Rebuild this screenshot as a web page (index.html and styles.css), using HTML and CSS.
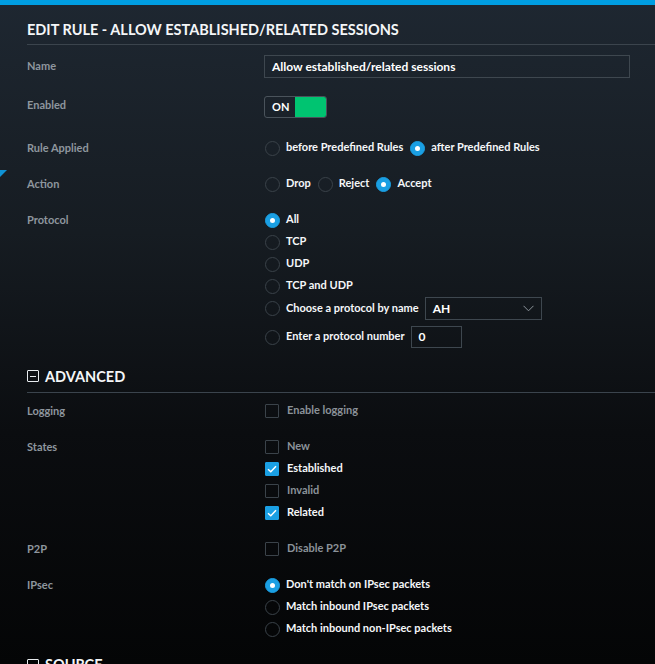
FILE: index.html
```html
<!DOCTYPE html>
<html lang="en">
<head>
<meta charset="utf-8">
<title>Edit Rule</title>
<link rel="stylesheet" href="styles.css">
</head>
<body>
<div class="topbar"></div>
<div class="panel">
  <span class="pointer"></span>
  <h1 class="title">EDIT RULE - ALLOW ESTABLISHED/RELATED SESSIONS</h1>

  <div class="rows rows-first">
    <div class="row">
      <div class="label label-input">Name</div>
      <div class="ctrl"><div class="textbox textbox-wide">Allow established/related sessions</div></div>
    </div>
    <div class="row row-toggle">
      <div class="label label-toggle">Enabled</div>
      <div class="ctrl"><div class="toggle"><span class="toggle-on">ON</span><span class="toggle-knob"></span></div></div>
    </div>
    <div class="row row-after-toggle">
      <div class="label">Rule Applied</div>
      <div class="ctrl inline">
        <label class="opt"><span class="radio"></span><span class="txt">before Predefined Rules</span></label>
        <label class="opt"><span class="radio on"></span><span class="txt">after Predefined Rules</span></label>
      </div>
    </div>
    <div class="row">
      <div class="label">Action</div>
      <div class="ctrl inline">
        <label class="opt"><span class="radio"></span><span class="txt">Drop</span></label>
        <label class="opt"><span class="radio"></span><span class="txt">Reject</span></label>
        <label class="opt"><span class="radio on"></span><span class="txt">Accept</span></label>
      </div>
    </div>
    <div class="row">
      <div class="label">Protocol</div>
      <div class="ctrl">
        <label class="opt"><span class="radio on"></span><span class="txt">All</span></label>
        <label class="opt"><span class="radio"></span><span class="txt">TCP</span></label>
        <label class="opt"><span class="radio"></span><span class="txt">UDP</span></label>
        <label class="opt"><span class="radio"></span><span class="txt">TCP and UDP</span></label>
        <label class="opt opt-select"><span class="radio"></span><span class="txt">Choose a protocol by name</span>
          <span class="textbox select">AH<svg class="chev" width="11" height="7" viewBox="0 0 11 7"><path d="M0.5 0.8 L5.5 5.8 L10.5 0.8" fill="none" stroke="#8c949b" stroke-width="1"/></svg></span>
        </label>
        <label class="opt opt-number"><span class="radio"></span><span class="txt">Enter a protocol number</span>
          <span class="textbox number">0</span>
        </label>
      </div>
    </div>
  </div>

  <h2 class="section section-adv"><span class="collapse"></span>ADVANCED</h2>

  <div class="rows rows-adv">
    <div class="row">
      <div class="label">Logging</div>
      <div class="ctrl">
        <label class="opt"><span class="check"></span><span class="txt dim">Enable logging</span></label>
      </div>
    </div>
    <div class="row">
      <div class="label">States</div>
      <div class="ctrl">
        <label class="opt"><span class="check"></span><span class="txt dim">New</span></label>
        <label class="opt"><span class="check on"><svg width="10" height="8" viewBox="0 0 10 8"><path d="M1 4.2 L3.8 6.8 L9 1.2" fill="none" stroke="#fff" stroke-width="1.5"/></svg></span><span class="txt">Established</span></label>
        <label class="opt"><span class="check"></span><span class="txt dim">Invalid</span></label>
        <label class="opt"><span class="check on"><svg width="10" height="8" viewBox="0 0 10 8"><path d="M1 4.2 L3.8 6.8 L9 1.2" fill="none" stroke="#fff" stroke-width="1.5"/></svg></span><span class="txt">Related</span></label>
      </div>
    </div>
    <div class="row">
      <div class="label">P2P</div>
      <div class="ctrl">
        <label class="opt"><span class="check"></span><span class="txt dim">Disable P2P</span></label>
      </div>
    </div>
    <div class="row">
      <div class="label">IPsec</div>
      <div class="ctrl">
        <label class="opt"><span class="radio on"></span><span class="txt">Don't match on IPsec packets</span></label>
        <label class="opt"><span class="radio"></span><span class="txt">Match inbound IPsec packets</span></label>
        <label class="opt"><span class="radio"></span><span class="txt">Match inbound non-IPsec packets</span></label>
      </div>
    </div>
  </div>

  <h2 class="section section-src"><span class="collapse"></span>SOURCE</h2>
</div>
</body>
</html>
```
FILE: styles.css
```css
* { box-sizing: border-box; }
html, body {
  margin: 0;
  padding: 0;
  height: 100%;
  overflow: hidden;
}
body {
  font-family: Lato, "Open Sans", "Liberation Sans", sans-serif;
  color: #ffffff;
  background: linear-gradient(to bottom, #1e2731 0%, #161c22 35%, #0b0d10 65%, #040506 100%);
}
.topbar {
  height: 5px;
  background: #009ee2;
}
.panel {
  position: relative;
  padding-left: 27px;
}
.pointer {
  position: absolute;
  left: 0;
  top: 165px;
  width: 0;
  height: 0;
  border-top: 7px solid #0f93d6;
  border-right: 7px solid transparent;
}
.title {
  margin: 0;
  height: 40px;
  padding-top: 16px;
  font-size: 14.5px;
  font-weight: 700;
  letter-spacing: 0;
  line-height: 17px;
  color: #f4f6f8;
  border-bottom: 1px solid #3b444d;
}
.rows {
  display: flex;
  flex-direction: column;
  gap: 14px;
}
.rows-first { padding-top: 10px; }
.rows-adv { padding-top: 7px; }
.row {
  display: grid;
  grid-template-columns: 237px 1fr;
  align-items: start;
}
.row-toggle { margin-top: 4px; }
.row-after-toggle { margin-top: 5px; }
.label {
  font-size: 11px;
  font-weight: 700;
  color: #8e969e;
  line-height: 21px;
}
.label-input { line-height: 22px; }
.label-toggle { line-height: 18px; }
.ctrl { display: flex; flex-direction: column; }
.ctrl.inline { flex-direction: row; gap: 6px; }
.opt {
  display: flex;
  align-items: center;
  height: 22px;
  gap: 6px;
  font-size: 11px;
  font-weight: 700;
  color: #f5f7f9;
}
.txt { padding-bottom: 3px; }
.opt-select { height: 23px; margin-top: 0; }
.opt-number { margin-top: 6px; }
.txt.dim { color: #8b9299; }
.radio {
  width: 15px;
  height: 15px;
  border-radius: 50%;
  border: 1px solid #3a4249;
  margin-left: 1px;
  flex: none;
  display: flex;
  align-items: center;
  justify-content: center;
}
.radio.on {
  background: #1a9fe3;
  border-color: #1a9fe3;
}
.radio.on::after {
  content: "";
  width: 5px;
  height: 5px;
  border-radius: 50%;
  background: #ffffff;
}
.check {
  width: 14px;
  height: 14px;
  border: 1px solid #3b434a;
  border-radius: 1px;
  margin-left: 1px;
  margin-right: 2px;
  flex: none;
  display: flex;
  align-items: center;
  justify-content: center;
}
.check.on {
  background: #1a9fe3;
  border-color: #1a9fe3;
}
.textbox {
  display: flex;
  align-items: center;
  height: 23px;
  border: 1px solid #3e474f;
  padding-left: 7px;
  padding-bottom: 1px;
  font-size: 12px;
  font-weight: 700;
  color: #ffffff;
}
.textbox-wide { width: 366px; }
.select {
  width: 117px;
  justify-content: space-between;
  padding-right: 7px;
}
.chev { display: block; }
.number { width: 51px; height: 22px; }
.toggle {
  display: flex;
  width: 63px;
  height: 22px;
  border: 1px solid #4a535b;
  border-radius: 3px;
  overflow: hidden;
}
.toggle-on {
  width: 30px;
  padding-left: 7px;
  font-size: 11px;
  font-weight: 700;
  line-height: 20px;
  color: #ffffff;
}
.toggle-knob {
  flex: 1;
  background: #00c471;
}
.section {
  margin: 0;
  display: flex;
  align-items: center;
  gap: 6px;
  height: 33px;
  font-size: 14.5px;
  font-weight: 700;
  color: #f4f6f8;
  border-bottom: 1px solid #3b444d;
}
.section-adv { margin-top: 12px; }
.section-src { margin-top: 8px; border-bottom: none; }
.collapse {
  width: 12px;
  height: 12px;
  border: 1px solid #e8ecef;
  border-radius: 1px;
  position: relative;
  flex: none;
}
.collapse::after {
  content: "";
  position: absolute;
  left: 2px;
  right: 2px;
  top: 4.5px;
  height: 1px;
  background: #e8ecef;
}
```
